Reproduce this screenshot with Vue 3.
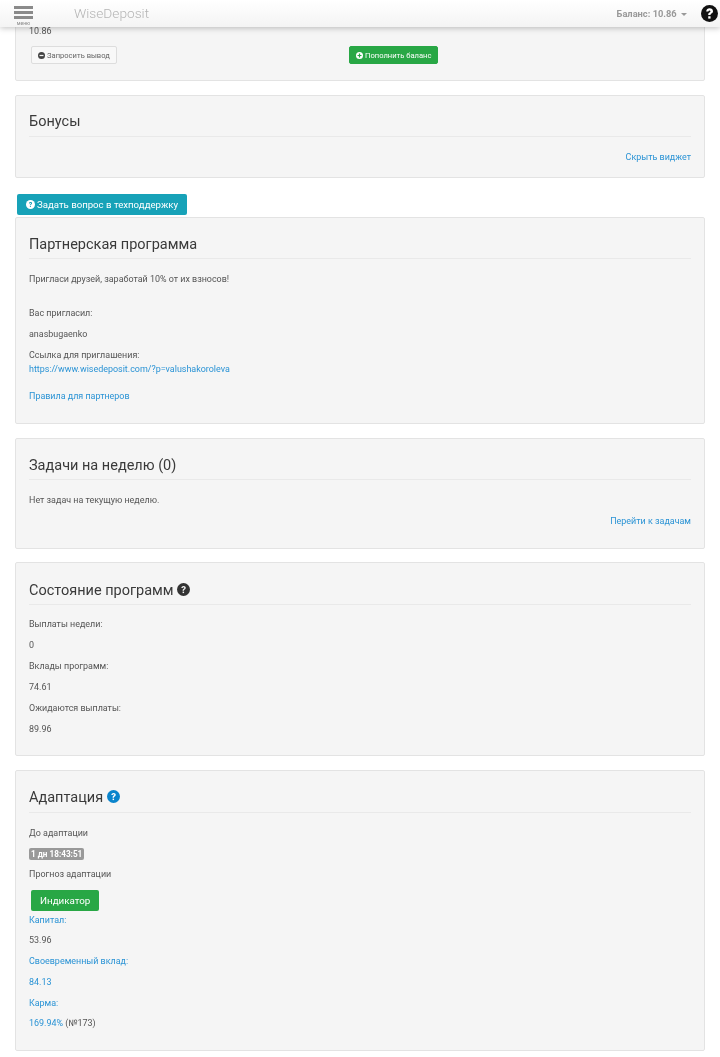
<script setup>
const stats = [
  ['Выплаты недели:', '0'],
  ['Вклады программ:', '74.61'],
  ['Ожидаются выплаты:', '89.96']
]
</script>

<template>
  <div class="page">
    <header class="topbar">
      <div class="burger">
        <span></span><span></span><span></span>
        <small>меню</small>
      </div>
      <div class="brand">WiseDeposit</div>
      <div class="balance">Баланс: 10.86 <i class="caret"></i></div>
      <svg class="help" viewBox="0 0 16 16">
        <circle cx="8" cy="8" r="8" fill="#111" />
        <path d="M4.9 6c.1-1.9 1.5-3 3.2-3 1.9 0 3.2 1.2 3.2 2.8 0 1.2-.7 1.8-1.5 2.3-.6.4-.8.6-.8 1.1v.3H6.8v-.5c0-1 .4-1.5 1.2-2 .6-.4.9-.6.9-1 0-.5-.4-.8-.9-.8-.6 0-1 .4-1.1 1z" fill="#fff" />
        <rect x="6.8" y="10.6" width="2.2" height="2.2" fill="#fff" />
      </svg>
    </header>

    <section class="card first">
      <p class="val">10.86</p>
      <div class="actions">
        <div class="col">
          <button class="btn light">
            <svg class="ico" viewBox="0 0 16 16"><circle cx="8" cy="8" r="8" fill="#444" /><rect x="3.5" y="6.6" width="9" height="2.8" fill="#f5f5f5" /></svg>
            Запросить вывод
          </button>
        </div>
        <div class="col">
          <button class="btn green">
            <svg class="ico" viewBox="0 0 16 16"><circle cx="8" cy="8" r="8" fill="#fff" /><path d="M6.6 3.5h2.8v3.1h3.1v2.8H9.4v3.1H6.6V9.4H3.5V6.6h3.1z" fill="#28a745" /></svg>
            Пополнить баланс
          </button>
        </div>
      </div>
    </section>

    <section class="card bonus">
      <h4>Бонусы</h4>
      <div class="right"><a>Скрыть виджет</a></div>
    </section>

    <button class="support">
      <svg class="ico q" viewBox="0 0 16 16">
        <circle cx="8" cy="8" r="8" fill="#fff" />
        <path d="M5.3 6.1c.1-1.6 1.3-2.5 2.8-2.5 1.6 0 2.7 1 2.7 2.3 0 1.1-.6 1.6-1.4 2.1-.6.4-.8.6-.8 1.2v.3H6.9v-.5c0-1 .4-1.5 1.2-2 .6-.4.9-.6.9-1 0-.5-.4-.8-.9-.8-.6 0-1 .4-1.1 1z" fill="#17a2b8" />
        <rect x="6.9" y="10.6" width="1.8" height="1.8" fill="#17a2b8" />
      </svg>
      Задать вопрос в техподдержку
    </button>

    <section class="card partner">
      <h4 class="low">Партнерская программа</h4>
      <p class="invite">Пригласи друзей, заработай 10% от их взносов!</p>
      <p>Вас пригласил:</p>
      <p>anasbugaenko</p>
      <p class="ref">Ссылка для приглашения:<br /><a>https://www.wisedeposit.com/?p=valushakoroleva</a></p>
      <p class="rules"><a>Правила для партнеров</a></p>
    </section>

    <section class="card tasks">
      <h4 class="low">Задачи на неделю (0)</h4>
      <p>Нет задач на текущую неделю.</p>
      <div class="right"><a>Перейти к задачам</a></div>
    </section>

    <section class="card state">
      <h4 class="low tight">
        Состояние программ
        <svg class="title-ico" viewBox="0 0 16 16">
          <circle cx="8" cy="8" r="8" fill="#333" />
          <path d="M5.3 6.1c.1-1.6 1.3-2.5 2.8-2.5 1.6 0 2.7 1 2.7 2.3 0 1.1-.6 1.6-1.4 2.1-.6.4-.8.6-.8 1.2v.3H6.9v-.5c0-1 .4-1.5 1.2-2 .6-.4.9-.6.9-1 0-.5-.4-.8-.9-.8-.6 0-1 .4-1.1 1z" fill="#f5f5f5" />
          <rect x="6.9" y="10.6" width="1.8" height="1.8" fill="#f5f5f5" />
        </svg>
      </h4>
      <template v-for="s in stats" :key="s[0]">
        <p>{{ s[0] }}</p>
        <p>{{ s[1] }}</p>
      </template>
    </section>

    <section class="card adapt">
      <h4>
        Адаптация
        <svg class="title-ico" viewBox="0 0 16 16">
          <circle cx="8" cy="8" r="8" fill="#0a84cc" />
          <path d="M5.3 6.1c.1-1.6 1.3-2.5 2.8-2.5 1.6 0 2.7 1 2.7 2.3 0 1.1-.6 1.6-1.4 2.1-.6.4-.8.6-.8 1.1v.3H6.9v-.5c0-1 .4-1.5 1.2-2 .6-.4.9-.6.9-1 0-.5-.4-.8-.9-.8-.6 0-1 .4-1.1 1z" fill="#fff" />
          <rect x="6.9" y="10.6" width="1.8" height="1.8" fill="#fff" />
        </svg>
      </h4>
      <p>До адаптации</p>
      <p class="timer"><span class="badge">1 дн 18:43:51</span></p>
      <p class="forecast">Прогноз адаптации</p>
      <button class="indicator">Индикатор</button>
      <p class="capital"><a>Капитал:</a></p>
      <p>53.96</p>
      <p><a>Своевременный вклад:</a></p>
      <p><a>84.13</a></p>
      <p class="karma"><a>Карма:</a></p>
      <p><a>169.94%</a> (№173)</p>
    </section>
  </div>
</template>

<style>
html, body {
  margin: 0;
  background: #fff;
  overflow: hidden;
}
</style>

<style scoped>
.page {
  position: relative;
  height: 1057px;
  overflow: hidden;
  padding: 0 15px;
  box-sizing: border-box;
  font-family: Roboto, "Liberation Sans", sans-serif;
  font-size: 8.95px;
  line-height: 15px;
  color: #555;
  filter: blur(0.35px);
}

.topbar {
  position: absolute;
  top: 0;
  left: 0;
  right: 0;
  height: 27px;
  z-index: 5;
  display: flex;
  align-items: center;
  background: linear-gradient(#fff, #f4f4f4);
  box-shadow: 0 1px 6px rgba(0, 0, 0, 0.25);
}

.burger {
  width: 19px;
  margin: 4px 0 0 14px;
  display: flex;
  flex-direction: column;
  gap: 2px;
}

.burger span {
  height: 3px;
  background: #8a8a8a;
}

.burger small {
  font-size: 5px;
  line-height: 5px;
  color: #888;
  text-align: center;
}

.brand {
  margin-left: 41px;
  font-size: 13.7px;
  font-weight: 300;
  color: #b5b5b5;
}

.balance {
  margin-left: auto;
  font-size: 9.3px;
  font-weight: 700;
  color: #999;
}

.caret {
  display: inline-block;
  margin-left: 2px;
  vertical-align: 1px;
  border-left: 3px solid transparent;
  border-right: 3px solid transparent;
  border-top: 3px solid #999;
}

.help {
  width: 17px;
  height: 17px;
  margin: 0 2px 0 14px;
}

.card {
  box-sizing: border-box;
  background: #f5f5f5;
  border: 1px solid #e3e3e3;
  border-radius: 2px;
  padding: 14px 13px;
  margin-bottom: 14px;
}

.first {
  height: 82px;
  margin-top: -1px;
  padding-top: 24px;
}

p {
  margin: 0 0 6px;
}

.val {
  margin-bottom: 7px;
}

a {
  color: #2a93d5;
}

h4 {
  margin: 2px 0 13px;
  padding-bottom: 4px;
  border-bottom: 1px solid #e9e9e9;
  font-size: 14.5px;
  line-height: 20px;
  font-weight: 400;
  color: #3a3a3a;
}

h4.low {
  margin-top: 3px;
  padding-bottom: 3px;
}

h4.tight {
  margin-bottom: 12px;
}

.title-ico {
  width: 13px;
  height: 13px;
  vertical-align: -1px;
}

.actions {
  display: flex;
}

.col {
  flex: 0 0 318px;
  padding-left: 2px;
  box-sizing: border-box;
}

.btn {
  height: 18px;
  padding: 0 6px;
  border-radius: 2px;
  font: 400 7.6px Roboto, sans-serif;
  display: flex;
  align-items: center;
  gap: 2px;
}

.light {
  background: #f8f8f8;
  border: 1px solid #ddd;
  color: #666;
}

.green {
  background: #28a745;
  border: 1px solid #28a745;
  color: #fff;
}

.ico {
  width: 7px;
  height: 7px;
}

.right {
  text-align: right;
}

.bonus {
  height: 83px;
  margin-bottom: 16px;
}

.support {
  display: flex;
  align-items: center;
  gap: 2px;
  height: 21px;
  margin: 0 0 2px 2px;
  padding: 0 9px;
  background: #17a2b8;
  border: 0;
  border-radius: 2px;
  color: #fff;
  font: 400 9.65px Roboto, sans-serif;
}

.q {
  width: 9px;
  height: 9px;
}

.partner {
  height: 207px;
}

.invite {
  margin-bottom: 19px;
}

.ref {
  line-height: 14px;
  margin-bottom: 13px;
}

.tasks {
  height: 111px;
  margin-bottom: 13px;
}

.state {
  height: 194px;
  padding-top: 15px;
}

.adapt {
  height: 281px;
  padding-top: 15px;
}

.timer {
  margin-bottom: 5px;
}

.forecast {
  margin-bottom: 8px;
}

.badge {
  display: inline-block;
  padding: 0 2px;
  line-height: 12px;
  background: #999;
  border-radius: 2px;
  color: #fff;
  font-size: 8.2px;
  font-weight: 700;
}

.indicator {
  display: block;
  height: 21px;
  margin: 0 0 2px 2px;
  padding: 0 9px;
  background: #28a745;
  border: 0;
  border-radius: 2px;
  color: #fff;
  font: 400 9.8px Roboto, sans-serif;
}

.capital {
  margin-bottom: 5px;
}

.karma {
  margin-bottom: 5px;
}
</style>
